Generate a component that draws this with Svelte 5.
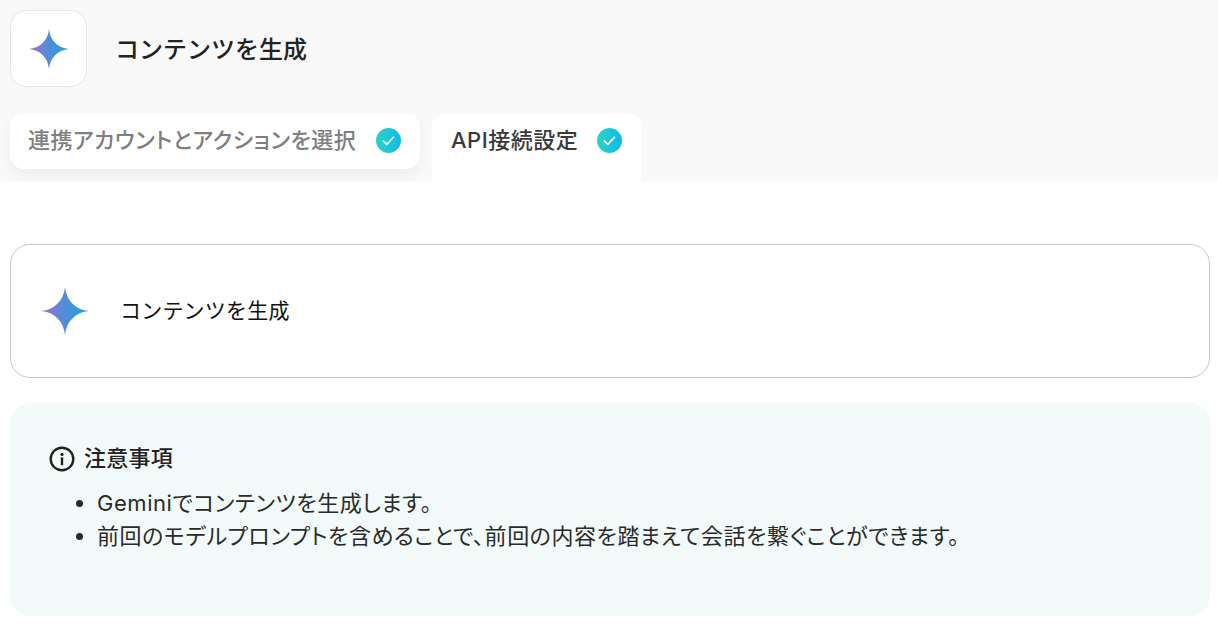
<script lang="ts">
  const notes = [
    "Geminiでコンテンツを生成します。",
    "前回のモデルプロンプトを含めることで、前回の内容を踏まえて会話を繋ぐことができます。",
  ];
</script>

{#snippet sparkle(size: number, id: string)}
  <svg width={size} height={size} viewBox="0 0 48 48" aria-hidden="true">
    <defs>
      <linearGradient {id} x1="0" y1="0.5" x2="1" y2="0.5">
        <stop offset="0" stop-color="#9b72cb" />
        <stop offset="0.55" stop-color="#4b90d8" />
        <stop offset="1" stop-color="#1aa5ec" />
      </linearGradient>
    </defs>
    <path
      d="M24 0C25.2 13.5 34.5 22.8 48 24C34.5 25.2 25.2 34.5 24 48C22.8 34.5 13.5 25.2 0 24C13.5 22.8 22.8 13.5 24 0Z"
      fill="url(#{id})"
    />
  </svg>
{/snippet}

{#snippet check()}
  <svg class="check" width="25" height="25" viewBox="0 0 25 25" aria-hidden="true">
    <defs>
      <linearGradient id="check-grad" x1="0" y1="0" x2="1" y2="0">
        <stop offset="0" stop-color="#2bd4c4" />
        <stop offset="1" stop-color="#10b8ee" />
      </linearGradient>
    </defs>
    <circle cx="12.5" cy="12.5" r="12.5" fill="url(#check-grad)" />
    <path d="M6.8 12.6l4 3.8 7.2-7.6" fill="none" stroke="#fff" stroke-width="1.6" />
  </svg>
{/snippet}

<div class="page">
  <header class="top">
    <div class="head">
      <div class="tile">{@render sparkle(40, "spark-a")}</div>
      <h1>コンテンツを生成</h1>
    </div>
    <nav class="tabs">
      <div class="tab idle">
        <span>連携アカウントとアクションを選択</span>
        {@render check()}
      </div>
      <div class="tab current">
        <span>API接続設定</span>
        {@render check()}
      </div>
    </nav>
  </header>

  <main class="body">
    <section class="action">
      {@render sparkle(48, "spark-b")}
      <span>コンテンツを生成</span>
    </section>

    <section class="notice">
      <h2>
        <svg width="26" height="26" viewBox="0 0 26 26" fill="none" aria-hidden="true">
          <circle cx="13" cy="13" r="11.3" stroke="#222" stroke-width="2.4" />
          <circle cx="13" cy="8.4" r="1.6" fill="#222" />
          <rect x="11.8" y="11.4" width="2.4" height="7.8" fill="#222" />
        </svg>
        <span>注意事項</span>
      </h2>
      <ul>
        {#each notes as note}
          <li>{note}</li>
        {/each}
      </ul>
    </section>
  </main>
</div>

<style>
  :global(body) {
    background: #fff;
  }

  .page {
    font-family: Inter, "Noto Sans CJK JP", sans-serif;
    color: #222;
    height: 625px;
    overflow: hidden;
  }

  .top {
    background: #f9f9f9;
    height: 181px;
    padding: 10px 10px 0;
    box-sizing: border-box;
  }

  .head {
    display: flex;
    align-items: center;
    gap: 28px;
  }

  .tile {
    width: 77px;
    height: 77px;
    box-sizing: border-box;
    background: #fff;
    border: 1px solid #e6e6e6;
    border-radius: 16px;
    display: flex;
    align-items: center;
    justify-content: center;
  }

  h1 {
    margin: -2px 0 0;
    font-size: 24px;
    font-weight: 500;
  }

  .tabs {
    display: flex;
    align-items: flex-start;
    gap: 12px;
    margin-top: 26px;
  }

  .tab {
    display: flex;
    align-items: center;
    justify-content: space-between;
    background: #fff;
    border-radius: 14px;
    font-size: 22px;
    font-weight: 500;
    letter-spacing: 0.5px;
    font-feature-settings: "palt";
    height: 56px;
    box-sizing: border-box;
  }

  .tab span {
    margin-top: -4px;
  }

  .idle {
    color: #7f7f7f;
    width: 410px;
    padding: 0 19px 2px 18px;
    box-shadow: 0 6px 14px rgba(0, 0, 0, 0.05);
  }

  .current {
    width: 209px;
    height: 68px;
    border-radius: 14px 14px 0 0;
    color: #3a3a3a;
    padding: 0 19px 14px;
    position: relative;
    z-index: 1;
  }

  .body {
    padding: 63px 8px 0 10px;
  }

  .action {
    display: flex;
    align-items: center;
    gap: 31px;
    height: 134px;
    box-sizing: border-box;
    border: 1px solid #c8c8c8;
    border-radius: 20px;
    padding-left: 30px;
    font-size: 21px;
    letter-spacing: 0.2px;
    color: #111;
  }

  .action span {
    margin-top: -4px;
  }

  .notice {
    margin-top: 25px;
    height: 213px;
    box-sizing: border-box;
    background: #f3fbfa;
    border-radius: 20px;
    padding: 43px 39px;
  }

  h2 {
    display: flex;
    align-items: center;
    gap: 9px;
    margin: 0;
    font-size: 22px;
    line-height: 26px;
    font-weight: 500;
    letter-spacing: 0.25px;
  }

  h2 span {
    margin-top: -2px;
  }

  ul {
    margin: 15px 0 0;
    padding-left: 48px;
    font-size: 22px;
    line-height: 33px;
    letter-spacing: 0.55px;
    font-feature-settings: "palt";
    color: #2a2a2a;
  }
</style>
